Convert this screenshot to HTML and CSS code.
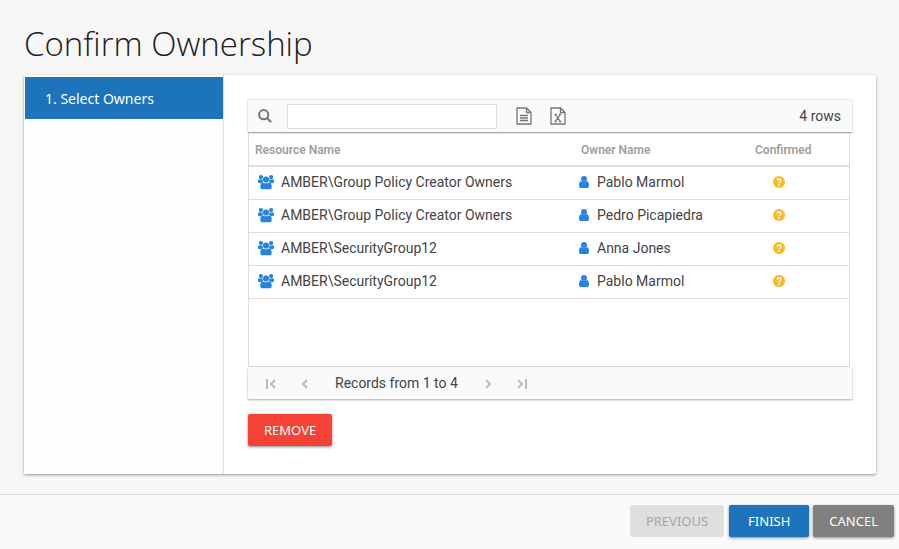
FILE: index.html
```html
<!DOCTYPE html>
<html lang="en">
<head>
    <meta charset="UTF-8">
    <title>Confirm Ownership</title>
    <link rel="stylesheet" href="styles.css">
</head>
<body>
    <svg class="sprite" aria-hidden="true">
        <symbol id="icon-group" viewBox="0 0 16 16">
            <circle cx="2.900" cy="3.100" r="2.100"/>
            <circle cx="13.100" cy="3.100" r="2.100"/>
            <path d="M0 7.500C0 6 .3 5.200 1 5.200c.5 0 1 .4 2 .4.700 0 1.200-.1 1.600-.2C4.600 6.700 4.800 7.500 5.200 8.200c-1 0-1.800.4-2.400 1H1.500C.6 9.200 0 8.700 0 7.500z"/>
            <path d="M16 7.500c0-1.500-.3-2.300-1-2.300-.5 0-1 .4-2 .4-.7 0-1.200-.1-1.600-.2 0 1.300-.2 2.100-.6 2.800 1 0 1.800.4 2.400 1h1.300c.9 0 1.500-.5 1.500-1.700z"/>
            <circle cx="8" cy="5.500" r="3.100"/>
            <path d="M4.800 8.400C3 8.400 2.300 10.500 2.300 12.900 2.300 14.500 3.200 15.200 4.400 15.200h7.200c1.200 0 2.100-.7 2.100-2.300 0-2.400-.7-4.500-2.500-4.500-.5 0-1.400.9-3.200.9S5.300 8.400 4.800 8.400z"/>
        </symbol>
        <symbol id="icon-user" viewBox="0 0 10 12">
            <circle cx="5" cy="3" r="3"/>
            <path d="M2.300 5.100C.6 5.300 0 7.300 0 9.400 0 11 .8 12 2.100 12h5.800C9.200 12 10 11 10 9.400 10 7.300 9.400 5.300 7.700 5.100 7 5.900 6 6.200 5 6.200S3 5.900 2.300 5.100z"/>
        </symbol>
        <symbol id="icon-question" viewBox="0 0 12 12">
            <circle class="question-disc" cx="6" cy="6" r="6"/>
            <path class="question-hook" d="M4.200 4.600C4.400 3.500 5.100 3 6 3c1.100 0 1.900.6 1.900 1.500 0 1.300-1.800 1.300-1.800 2.800"/>
            <rect class="question-dot" x="5.200" y="8.200" width="1.700" height="1.600"/>
        </symbol>
    </svg>

    <main class="page">
        <h1 class="page-title">Confirm Ownership</h1>

        <div class="wizard">
            <nav class="steps">
                <a class="step active" href="#owners">1. Select Owners</a>
            </nav>

            <section class="step-content" id="owners">
                <div class="grid-toolbar">
                    <label class="search-label" for="search" aria-label="Search">
                        <svg class="search-icon" viewBox="0 0 14 14"><circle cx="5.700" cy="5.700" r="4.600"/><path d="M9 9l4.200 4.200"/></svg>
                    </label>
                    <input class="search-input" type="text" id="search">
                    <button class="icon-btn" type="button" aria-label="Export to text">
                        <svg class="file-icon" viewBox="0 0 16 18"><path d="M1 1h9.500L15 5.500V17H1zM10.500 1v4.500H15M4 8.500h8M4 11h8M4 13.500h8"/></svg>
                    </button>
                    <button class="icon-btn" type="button" aria-label="Export to Excel">
                        <svg class="file-icon" viewBox="0 0 16 18"><path d="M1 1h9.500L15 5.500V17H1zM10.500 1v4.500H15M5.500 7.500l4.800 7M10.300 7.500l-4.800 7M4.400 7.500h2.400M9 7.500h2.400M4.400 14.500h2.400M9 14.500h2.400"/></svg>
                    </button>
                    <span class="row-count">4 rows</span>
                </div>

                <div class="grid-body">
                    <table class="grid">
                        <thead>
                            <tr>
                                <th class="col-resource">Resource Name</th>
                                <th class="col-owner">Owner Name</th>
                                <th class="col-confirmed">Confirmed</th>
                            </tr>
                        </thead>
                        <tbody>
                            <tr>
                                <td><span class="cell"><svg class="group-icon"><use href="#icon-group"/></svg>AMBER\Group Policy Creator Owners</span></td>
                                <td><span class="cell"><svg class="user-icon"><use href="#icon-user"/></svg>Pablo Marmol</span></td>
                                <td><span class="cell cell-status"><svg class="question-icon"><use href="#icon-question"/></svg></span></td>
                            </tr>
                            <tr>
                                <td><span class="cell"><svg class="group-icon"><use href="#icon-group"/></svg>AMBER\Group Policy Creator Owners</span></td>
                                <td><span class="cell"><svg class="user-icon"><use href="#icon-user"/></svg>Pedro Picapiedra</span></td>
                                <td><span class="cell cell-status"><svg class="question-icon"><use href="#icon-question"/></svg></span></td>
                            </tr>
                            <tr>
                                <td><span class="cell"><svg class="group-icon"><use href="#icon-group"/></svg>AMBER\SecurityGroup12</span></td>
                                <td><span class="cell"><svg class="user-icon"><use href="#icon-user"/></svg>Anna Jones</span></td>
                                <td><span class="cell cell-status"><svg class="question-icon"><use href="#icon-question"/></svg></span></td>
                            </tr>
                            <tr>
                                <td><span class="cell"><svg class="group-icon"><use href="#icon-group"/></svg>AMBER\SecurityGroup12</span></td>
                                <td><span class="cell"><svg class="user-icon"><use href="#icon-user"/></svg>Pablo Marmol</span></td>
                                <td><span class="cell cell-status"><svg class="question-icon"><use href="#icon-question"/></svg></span></td>
                            </tr>
                        </tbody>
                    </table>
                </div>

                <div class="pager">
                    <button class="pager-btn" type="button" aria-label="First page"><svg viewBox="0 0 12 10"><path d="M2 0v10M10 1L6 5l4 4"/></svg></button>
                    <button class="pager-btn" type="button" aria-label="Previous page"><svg viewBox="0 0 12 10"><path d="M8 1L4 5l4 4"/></svg></button>
                    <span class="pager-text">Records from 1 to 4</span>
                    <button class="pager-btn" type="button" aria-label="Next page"><svg viewBox="0 0 12 10"><path d="M4 1l4 4-4 4"/></svg></button>
                    <button class="pager-btn" type="button" aria-label="Last page"><svg viewBox="0 0 12 10"><path d="M2 1l4 4-4 4M10 0v10"/></svg></button>
                </div>

                <button class="btn btn-danger" type="button">REMOVE</button>
            </section>
        </div>
    </main>

    <footer class="footer">
        <button class="btn btn-disabled" type="button" disabled>PREVIOUS</button>
        <button class="btn btn-primary" type="button">FINISH</button>
        <button class="btn btn-secondary" type="button">CANCEL</button>
    </footer>
</body>
</html>
```
FILE: styles.css
```css
* { box-sizing: border-box; }
body {
    display: flex;
    flex-direction: column;
    min-height: 100vh;
    margin: 0;
    background: #f7f7f7;
    color: #444;
    font-family: Roboto, sans-serif;
    font-size: 14px;
}
svg { display: block; }
button { font-family: inherit; cursor: pointer; }
.sprite { position: absolute; width: 0; height: 0; }

.page { display: flex; flex-direction: column; flex: 1; padding: 20px 23px 20px 24px; }
.page-title {
    margin: 0 0 7px;
    color: #212121;
    font-family: "Open Sans", sans-serif;
    font-size: 33px;
    font-weight: 350;
    line-height: 48px;
}

/* wizard card */
.wizard {
    display: flex;
    flex: 1;
    background: #fff;
    border-radius: 2px;
    box-shadow: 0 1px 3px rgba(0, 0, 0, .4);
}
.steps { width: 200px; padding: 2px 0 0 1px; background: #fdfdfd; border-right: 1px solid #e0e0e0; }
.step {
    display: block;
    padding: 1px 20px 0;
    color: #333;
    font-family: "Noto Sans", sans-serif;
    line-height: 41px;
    text-decoration: none;
}
.step.active { background: #1e74bc; color: #fff; }
.step-content { flex: 1; padding: 25px 24px 28px; }

/* grid */
.grid-toolbar, .pager {
    display: flex;
    align-items: center;
    background: #fafafa;
    box-shadow: 0 1px 2px rgba(0, 0, 0, .35);
}
.grid-toolbar { height: 33px; padding: 0 11px 0 10px; border-bottom: 1px solid #aaa; box-shadow: 0 0 2px rgba(0, 0, 0, .3); }
.search-icon { width: 14px; height: 14px; fill: none; stroke: #777; stroke-width: 2; }
.search-input { width: 210px; height: 25px; margin: 0 10px 0 15px; padding: 0 6px; border: 1px solid #ddd; background: #fff; font: inherit; }
.icon-btn { width: 34px; padding: 0 9px; border: 0; background: none; }
.file-icon { width: 16px; height: 18px; fill: none; stroke: #777; stroke-width: 1.3; }
.row-count { margin-left: auto; }
.grid-body { min-height: 234px; margin-right: 2px; border: 1px solid #ddd; border-top: 0; }
.grid { width: 100%; border-collapse: collapse; table-layout: fixed; }
.grid th {
    height: 33px;
    padding: 2px 6px 0;
    border-bottom: 2px solid #e0e0e0;
    color: #9e9e9e;
    font-size: 12px;
    font-weight: 600;
    text-align: left;
}
.grid td { height: 33px; padding: 0 6px 2px; border-bottom: 1px solid #ddd; }
.grid .col-resource { width: 54%; }
.grid .col-owner { width: 29%; padding-left: 8px; }
.grid .col-confirmed { padding-left: 8px; }
.cell { display: flex; align-items: center; }
.cell-status { padding-left: 20px; }
.group-icon { width: 16px; height: 16px; margin: 0 7px 0 3px; fill: #2583e2; }
.user-icon { width: 10px; height: 12px; margin-right: 8px; fill: #2583e2; }
.question-icon { width: 12px; height: 12px; }
.question-disc { fill: #fdb91d; }
.question-hook { fill: none; stroke: #fff; stroke-width: 1.6; }
.question-dot { fill: #fff; }

.pager { height: 32px; padding: 0 6px; }
.pager-btn { width: 34px; padding: 2px 11px 0; border: 0; background: none; }
.pager-btn svg { width: 12px; height: 10px; fill: none; stroke: #bbb; stroke-width: 2; }
.pager-text { padding: 0 13px; }

/* buttons */
.btn {
    height: 32px;
    padding: 0 16px;
    border: 0;
    border-radius: 2px;
    box-shadow: 0 1px 3px rgba(0, 0, 0, .45);
    color: #fff;
    font-family: "Noto Sans", sans-serif;
    font-size: 13px;
}
.btn-danger { margin-top: 15px; background: #f44336; }
.btn-primary { padding: 0 19px; background: #1e74bc; }
.btn-secondary { background: #808080; }
.btn-disabled { margin-right: 1px; background: #dfdfdf; box-shadow: none; color: #a6a6a6; }

.footer {
    display: flex;
    justify-content: flex-end;
    gap: 4px;
    padding: 10px 5px 12px;
    border-top: 1px solid #ddd;
    background: #fafafa;
}
```
